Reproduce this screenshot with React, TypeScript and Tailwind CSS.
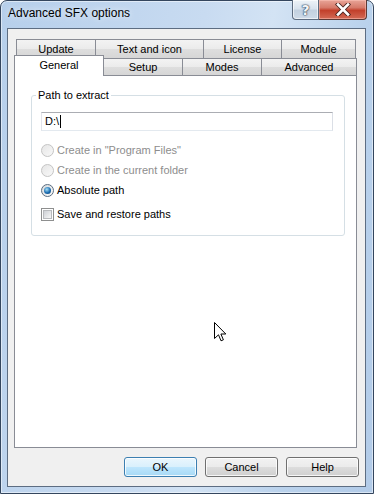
import React from "react";

const font = { fontFamily: '"Liberation Sans", Arial, sans-serif' };

function Tab({ label, w, last }: { label: string; w: number; last?: boolean }) {
  return (
    <div
      className={`flex items-center justify-center h-full border-t border-l border-[#898c95] bg-[linear-gradient(#f3f3f3,#ebebeb_50%,#dedede_50%,#d6d6d6)] text-[11px] text-black ${last ? "border-r" : ""}`}
      style={{ width: w }}
    >
      <span className="leading-none">{label}</span>
    </div>
  );
}

function Radio({ label, checked, disabled }: { label: string; checked?: boolean; disabled?: boolean }) {
  return (
    <div className="flex items-center h-[20px]">
      <div
        className={`w-[13px] h-[13px] rounded-full border flex items-center justify-center ${
          disabled
            ? "border-[#c4c4c4] bg-[linear-gradient(135deg,#e6e6e6,#f8f8f8)]"
            : "border-[#5b6d80] bg-[linear-gradient(135deg,#d6d9dc,#fbfbfb)]"
        }`}
      >
        {checked && (
          <div className="w-[7px] h-[7px] rounded-full bg-[radial-gradient(circle_at_40%_35%,#a6e0f8,#1a6cb0_55%,#0b3f74)]" />
        )}
      </div>
      <span className={`ml-[3px] text-[11px] leading-none ${disabled ? "text-[#8d8d8d]" : "text-black"}`}>{label}</span>
    </div>
  );
}

function Button({ label, primary }: { label: string; primary?: boolean }) {
  return (
    <div
      className={`w-[73px] h-[20px] rounded-[3px] border flex items-center justify-center text-[11px] text-black shadow-[inset_0_0_0_1px_rgba(255,255,255,0.8)] ${
        primary
          ? "border-[#3c7fb1] bg-[linear-gradient(#eaf6fd,#d9f0fc_50%,#bee6fd_50%,#a7d9f5)]"
          : "border-[#707070] bg-[linear-gradient(#f2f2f2,#ebebeb_50%,#dddddd_50%,#cfcfcf)]"
      }`}
    >
      <span className="leading-none">{label}</span>
    </div>
  );
}

export default function App() {
  return (
    <div
      className="relative w-[374px] h-[494px] rounded-t-[7px] border border-[#34465e] bg-[linear-gradient(100deg,#b6cfeb,#c8dbf1_45%,#d3e3f4_60%,#bad2ec_80%,#b2cbe8)] flex flex-col shadow-[inset_0_0_0_1px_rgba(255,255,255,0.5)]"
      style={font}
    >
      {/* Title bar */}
      <div className="flex justify-between h-[27px] shrink-0">
        <div className="pl-[7px] pt-[6px] text-[12px] text-black leading-none" style={{ textShadow: "0 0 6px rgba(255,255,255,0.9)" }}>
          Advanced SFX options
        </div>
        <div className="flex mr-[6px] -mt-px h-[20px]">
          <div className="w-[27px] h-full rounded-bl-[4px] border border-[#5d6c80] border-t-0 bg-[linear-gradient(#eef3f8,#d9e3ee_45%,#c3d1e0_55%,#cfdbe8)] flex items-center justify-center shadow-[inset_0_0_0_1px_rgba(255,255,255,0.6)]">
            <span
              className="text-[14px] font-bold text-[#f4f6f8] leading-none"
              style={{ fontFamily: '"DejaVu Sans", sans-serif', textShadow: "0 0 1px #33465e, 0 0 1px #33465e, 0 0 2px #33465e" }}
            >
              ?
            </span>
          </div>
          <div className="w-[48px] h-full rounded-br-[4px] border border-l-0 border-t-0 border-[#5d3a36] bg-[linear-gradient(#e8a598,#d67a6a_40%,#c2402b_55%,#d36a55)] flex items-center justify-center shadow-[inset_0_0_0_1px_rgba(255,200,190,0.5)]">
            <svg width="16" height="13" viewBox="0 0 16 13">
              <path d="M3 1.5 L13 11.5 M13 1.5 L3 11.5" stroke="#4a2520" strokeWidth="4.4" strokeLinecap="square" />
              <path d="M3 1.5 L13 11.5 M13 1.5 L3 11.5" stroke="#ffffff" strokeWidth="2.6" strokeLinecap="square" />
            </svg>
          </div>
        </div>
      </div>

      {/* Client area */}
      <div className="ml-[6px] mr-[7px] mb-[6px] flex-1 border border-[#5d6d82] bg-[#f0f0f0] flex flex-col">
        <div className="ml-[6px] mt-[10px] w-[343px] flex flex-col">
          {/* back row */}
          <div className="flex ml-[2px] h-[19px]">
            <Tab label="Update" w={79} />
            <Tab label="Text and icon" w={108} />
            <Tab label="License" w={78} />
            <Tab label="Module" w={75} last />
          </div>
          {/* front row */}
          <div className="flex h-[17px] items-end">
            <div className="relative z-10 w-[90px] h-[21px] translate-y-[1px] -mr-px border-t border-l border-r border-[#898c95] bg-white flex justify-center pt-[4px] text-[11px] text-black">
              <span className="leading-none">General</span>
            </div>
            <div className="flex h-full">
              <Tab label="Setup" w={79} />
              <Tab label="Modes" w={79} />
              <Tab label="Advanced" w={96} last />
            </div>
          </div>
          {/* panel */}
          <div className="h-[373px] border border-[#898c95] bg-white flex flex-col">
            <div className="relative ml-[16px] mt-[19px] w-[314px] h-[141px] border border-[#d5dfe5] rounded-[3px] flex flex-col">
              <div className="absolute -top-[7px] left-[4px] px-[2px] bg-white text-[11px] text-black leading-none pt-px">
                Path to extract
              </div>
              <div className="ml-[9px] mt-[16px] w-[292px] h-[19px] border border-[#abadb3] border-l-[#e2e3ea] border-r-[#dbdfe6] border-b-[#e3e9ef] bg-white flex items-center pl-[3px]">
                <span className="text-[11px] text-black leading-none">D:\</span>
                <span className="ml-[1px] w-px h-[13px] bg-black" />
              </div>
              <div className="ml-[9px] mt-[9px] flex flex-col">
                <Radio label={'Create in "Program Files"'} disabled />
                <Radio label="Create in the current folder" disabled />
                <Radio label="Absolute path" checked />
                <div className="flex items-center h-[20px] mt-[4px]">
                  <div className="w-[13px] h-[13px] border border-[#8e8f8f] bg-white p-px">
                    <div className="w-full h-full border border-[#b8babd] bg-[linear-gradient(135deg,#cdd0d5,#f7f7f7)]" />
                  </div>
                  <span className="ml-[3px] text-[11px] leading-none text-black">Save and restore paths</span>
                </div>
              </div>
            </div>
          </div>
        </div>
        {/* buttons */}
        <div className="flex justify-end gap-[8px] mt-[9px] mr-[6px]">
          <Button label="OK" primary />
          <Button label="Cancel" />
          <Button label="Help" />
        </div>
      </div>

      {/* mouse cursor */}
      <svg className="absolute left-[213px] top-[321px]" width="13" height="21" viewBox="0 0 13 21">
        <path
          d="M0.5 0.5 L0.5 16.5 L4.5 12.8 L7 18.8 L9.4 17.8 L6.9 12 L11.8 12 Z"
          fill="#ffffff"
          stroke="#000000"
          strokeWidth="1"
          strokeLinejoin="miter"
        />
      </svg>
    </div>
  );
}
